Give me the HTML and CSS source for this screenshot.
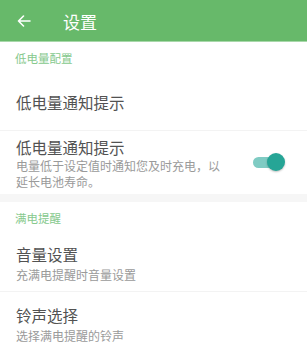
FILE: index.html
```html
<!DOCTYPE html>
<html lang="zh">
<head>
<meta charset="utf-8">
<link rel="stylesheet" href="styles.css">
</head>
<body>
<div class="app">
  <header class="bar">
    <svg class="back" width="14" height="12" viewBox="0 0 14 12">
      <path d="M13 6H1.5M6.5 1L1.5 6l5 5" fill="none" stroke="#fff" stroke-width="1.6" stroke-linecap="round" stroke-linejoin="round"/>
    </svg>
    <span class="bar-title">设置</span>
  </header>
  <div class="sec">低电量配置</div>
  <div class="row row-single">
    <div class="title">低电量通知提示</div>
  </div>
  <div class="line"></div>
  <div class="row row-switch">
    <div class="text">
      <div class="title">低电量通知提示</div>
      <div class="sub sub-multi">电量低于设定值时通知您及时充电，以<br>延长电池寿命。</div>
    </div>
    <div class="switch"><span class="track"></span><span class="thumb"></span></div>
  </div>
  <div class="band"></div>
  <div class="sec">满电提醒</div>
  <div class="row row-a">
    <div class="title">音量设置</div>
    <div class="sub">充满电提醒时音量设置</div>
  </div>
  <div class="line"></div>
  <div class="row row-b">
    <div class="title">铃声选择</div>
    <div class="sub">选择满电提醒的铃声</div>
  </div>
</div>
</body>
</html>
```
FILE: styles.css
```css
* { box-sizing: border-box; }
html, body { margin: 0; padding: 0; background: #fff; }
body { font-family: "Noto Sans CJK SC", "Noto Sans", sans-serif; overflow: hidden; }
.app { width: 307px; height: 347px; overflow: hidden; }
.bar {
  height: 42px;
  background: #67b96a;
  border-bottom: 1px solid #a8d8aa;
  display: flex;
  align-items: center;
  padding-left: 17px;
}
.back { display: block; }
.bar-title {
  color: #fff;
  font-size: 17px;
  margin-left: 32px;
  line-height: 20px;
  margin-top: 2px;
}
.sec {
  height: 32px;
  display: flex;
  align-items: center;
  padding-left: 15px;
  font-size: 11.5px;
  color: #86c98d;
}
.row { padding-left: 16px; display: flex; flex-direction: column; justify-content: center; }
.title { font-size: 15.5px; color: #525252; line-height: 20px; }
.sub { font-size: 12px; color: #9a9a9a; line-height: 12px; margin-top: 5px; }
.sub-multi { line-height: 16px; margin-top: 1px; }
.row-single { height: 56px; }
.row-switch {
  height: 63px;
  flex-direction: row;
  align-items: flex-start;
  justify-content: space-between;
  padding-top: 6px;
  padding-right: 22px;
}
.row-a { height: 57px; }
.row-b { height: 60px; padding-top: 3px; }
.line { height: 1px; background: #f3f3f3; }
.band { height: 8px; background: #f6f6f6; }
.switch { position: relative; width: 32px; height: 18px; margin-top: 16px; }
.track {
  position: absolute; left: 0; top: 4px; width: 30px; height: 11px;
  border-radius: 6px; background: #7fcbc3;
}
.thumb {
  position: absolute; right: 0; top: 0; width: 18px; height: 18px;
  border-radius: 50%; background: #26a596;
  box-shadow: 0 1px 2px rgba(0,0,0,0.25);
}
```
